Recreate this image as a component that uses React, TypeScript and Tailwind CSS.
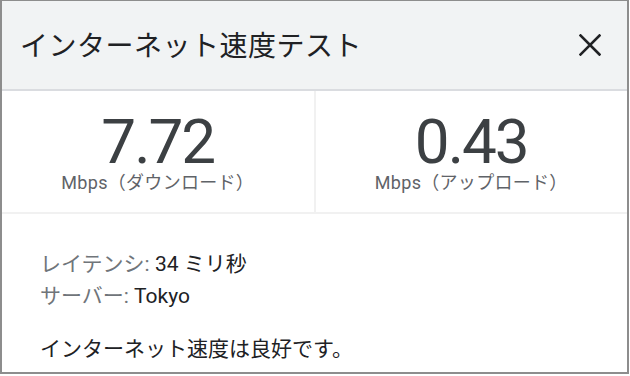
import { memo } from 'react'

const JP = "font-['Roboto','Noto_Sans_CJK_JP',sans-serif]"

const Stat = ({ value, label }: { value: string; label: string }) => (
  <div className="flex-1 flex flex-col items-center pt-[22px]">
    <span className="text-[62px] leading-[58px] text-[#3c4043] tracking-[-2px]">{value}</span>
    <span className="text-[18px] leading-[24px] text-[#5f6368] tracking-[0.3px]">{label}</span>
  </div>
)

const SpeedTestCard = memo(function SpeedTestCard() {
  return (
    <div className={`w-[630px] h-[376px] bg-white ${JP}`}>
      <div className="w-[629px] h-[374px] border-2 border-t border-[#8d8d8d] flex flex-col">
        {/* Header */}
        <header className="h-[90px] bg-[#f1f3f4] border-b-2 border-[#dadce0] flex items-center justify-between pl-[18px] pr-[26px] pt-[4px]">
          <h1 className="text-[28px] text-[#202124] font-normal tracking-[0.5px]">インターネット速度テスト</h1>
          <svg width="22" height="22" viewBox="0 0 22 22" className="text-[#202124] mt-[-4px]">
            <path d="M1.5 1.5L20.5 20.5M20.5 1.5L1.5 20.5" stroke="currentColor" strokeWidth="2.6" strokeLinecap="square" />
          </svg>
        </header>

        {/* Speeds */}
        <div className="h-[123px] flex border-b-2 border-[#f1f1f1]">
          <Stat value="7.72" label="Mbps（ダウンロード）" />
          <div className="w-[2px] bg-[#f1f1f1]" />
          <Stat value="0.43" label="Mbps（アップロード）" />
        </div>

        {/* Details */}
        <div className="flex-1 pl-[38px] pt-[33px] text-[21px] leading-[34px]">
          <p>
            <span className="text-[#70757a]">レイテンシ: </span>
            <span className="text-[#202124]">34 ミリ秒</span>
          </p>
          <p className="-mt-[2px]">
            <span className="text-[#70757a]">サーバー: </span>
            <span className="text-[#202124]">Tokyo</span>
          </p>
          <p className="mt-[19px] text-[#202124]">インターネット速度は良好です。</p>
        </div>
      </div>
    </div>
  )
})

export default function App() {
  return <SpeedTestCard />
}
